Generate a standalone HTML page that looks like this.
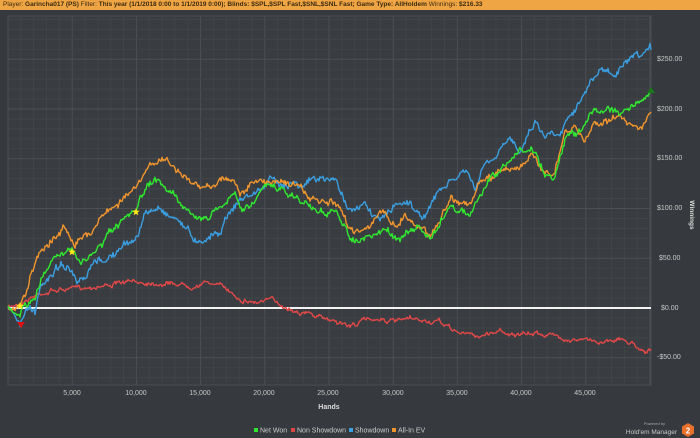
<!DOCTYPE html>
<html><head><meta charset="utf-8"><style>
html,body{margin:0;padding:0;width:700px;height:438px;overflow:hidden;background:#36393d;font-family:"Liberation Sans",sans-serif}
#hdr{position:absolute;left:0;top:0;width:700px;height:10px;background:#f0a544;font-size:6.5px;line-height:10px;color:#3a2a10;white-space:nowrap;padding-left:3px;box-sizing:border-box}
#hdr b{font-weight:bold}
svg{position:absolute;left:0;top:0}
.yl{font-size:7px;fill:#c8c8c8}
.xl{font-size:7px;fill:#c8c8c8}
</style></head><body>
<div id="hdr">Player: <b>Garincha017 (PS)</b> Filter: <b>This year (1/1/2018 0:00 to 1/1/2019 0:00); Blinds: $SPL,$SPL Fast,$SNL,$SNL Fast; Game Type: AllHoldem</b> Winnings: <b>$216.33</b></div>
<svg id="s" width="700" height="438" xmlns="http://www.w3.org/2000/svg">
<rect x="8" y="16" width="643" height="369" fill="#393c40" stroke="#4a4d52" stroke-width="1"/>
<g id="grid"></g>
<line x1="8" y1="308" x2="651" y2="308" stroke="#f2f2f2" stroke-width="2"/>
<g id="lines" fill="none" stroke-width="1.4" stroke-linejoin="round"></g>
<g class="yl">
<text x="657" y="61">$250.00</text><text x="657" y="111">$200.00</text><text x="657" y="160">$150.00</text>
<text x="657" y="210">$100.00</text><text x="659" y="260">$50.00</text><text x="661" y="310">$0.00</text><text x="657" y="359">-$50.00</text>
</g>
<text x="690" y="215" transform="rotate(90 690 215)" style="font-size:6.5px;font-weight:bold;fill:#ddd" text-anchor="middle">Winnings</text>
<g class="xl" text-anchor="middle">
<text x="72" y="395">5,000</text><text x="136" y="395">10,000</text><text x="200" y="395">15,000</text><text x="264" y="395">20,000</text>
<text x="328" y="395">25,000</text><text x="393" y="395">30,000</text><text x="457" y="395">35,000</text><text x="521" y="395">40,000</text><text x="585" y="395">45,000</text>
</g>
<text x="329" y="409" text-anchor="middle" style="font-size:7px;font-weight:bold;fill:#ddd">Hands</text>
<g style="font-size:7px;fill:#ccc">
<rect x="254" y="428" width="4" height="4" fill="#2ee62e"/><text x="260" y="432.5">Net Won</text>
<rect x="291" y="428" width="4" height="4" fill="#e04545"/><text x="297" y="432.5">Non Showdown</text>
<rect x="349" y="428" width="4" height="4" fill="#3aa0e0"/><text x="355" y="432.5">Showdown</text>
<rect x="392" y="428" width="4" height="4" fill="#f0952e"/><text x="398" y="432.5">All-In EV</text>
</g>
<text x="665" y="425" text-anchor="end" style="font-size:4px;fill:#aaa">Powered by</text>
<text x="677" y="434" text-anchor="end" style="font-size:6.5px;fill:#c8c8c8">Hold'em Manager</text>
<polygon points="688,423 694,426.5 694,433.5 688,437 682,433.5 682,426.5" fill="#e8702a"/>
<text x="688" y="433.5" text-anchor="middle" style="font-size:8px;font-weight:bold;fill:#fff">2</text>
<g id="marks"></g>
</svg>
<script>
var NS="http://www.w3.org/2000/svg",g=document.getElementById('grid'),L=document.getElementById('lines'),M=document.getElementById('marks');
function ln(x1,y1,x2,y2,c){var e=document.createElementNS(NS,'line');e.setAttribute('x1',x1);e.setAttribute('y1',y1);e.setAttribute('x2',x2);e.setAttribute('y2',y2);e.setAttribute('stroke',c);e.setAttribute('stroke-width',1);g.appendChild(e);}
for(var i=0;i<=50;i++){var x=8+i*12.84;ln(x,16,x,385,i%5==0?'#4c4f54':'#414448');}
for(var v=-70;v<=290;v+=10){var y=308-v*0.995;if(y<16||y>385)continue;ln(8,y,651,y,v%50==0?'#4c4f54':'#414448');}
var seed=7;function rnd(){seed=(seed*16807)%2147483647;return seed/2147483647;}
function path(pts,col,amp){var d='',w=0;for(var k=0;k<pts.length-1;k++){var a=pts[k],b=pts[k+1];for(var x=a[0];x<b[0];x+=1){var t=(x-a[0])/(b[0]-a[0]);w=w*0.85+(rnd()-0.5)*amp*0.9;var y=a[1]+(b[1]-a[1])*t+w+(rnd()-0.5)*amp*0.8;d+=(d?'L':'M')+x.toFixed(1)+' '+y.toFixed(1);}}
d+='L'+pts[pts.length-1][0]+' '+pts[pts.length-1][1];var e=document.createElementNS(NS,'path');e.setAttribute('d',d);e.setAttribute('stroke',col);L.appendChild(e);}
var red=[[8,308],[15,305],[25,300],[40,293],[55,290],[75,289],[100,285],[125,283],[150,282],[175,283],[190,285],[210,282],[225,288],[240,298],[255,302],[270,300],[290,308],[305,312],[320,318],[335,320],[350,326],[365,320],[380,318],[395,322],[410,320],[440,323],[460,333],[480,336],[500,330],[520,336],[540,333],[560,337],[580,340],[600,342],[615,338],[630,342],[645,350],[651,349]];
var blue=[[8,310],[15,318],[20,325],[30,305],[35,315],[40,290],[50,275],[62,262],[70,270],[77,285],[85,283],[92,268],[100,262],[110,257],[130,243],[136,238],[145,215],[160,207],[170,215],[180,220],[195,240],[205,237],[220,230],[230,210],[240,200],[260,190],[270,180],[280,187],[290,180],[300,183],[310,180],[320,180],[335,180],[345,200],[355,212],[365,205],[375,218],[385,217],[395,205],[410,200],[420,218],[430,208],[440,190],[455,180],[465,170],[475,190],[485,165],[495,160],[510,140],[520,148],[535,120],[545,135],[560,130],[575,105],[585,93],[600,70],[615,75],[630,62],[640,60],[651,50]];
var orange=[[8,308],[20,302],[27,290],[30,275],[37,255],[45,243],[55,235],[65,228],[75,240],[80,235],[90,235],[100,215],[110,210],[125,195],[136,190],[145,175],[155,163],[160,158],[165,160],[175,168],[185,178],[200,190],[210,185],[225,177],[235,180],[240,195],[250,185],[260,183],[270,182],[280,178],[290,183],[300,187],[310,200],[320,203],[335,205],[350,228],[360,230],[370,222],[385,213],[395,225],[405,215],[420,227],[430,235],[440,218],[452,196],[460,200],[470,205],[480,183],[490,180],[500,170],[510,166],[520,167],[530,158],[540,167],[555,173],[565,135],[575,128],[585,142],[595,122],[610,118],[625,120],[640,126],[651,112]];
var green=[[8,310],[15,315],[20,320],[25,305],[35,300],[40,285],[45,272],[55,255],[62,248],[72,252],[80,265],[90,258],[105,240],[120,225],[136,215],[140,200],[150,185],[160,183],[170,190],[180,200],[195,215],[205,222],[215,210],[225,200],[235,195],[240,210],[250,203],[260,193],[270,185],[280,190],[290,195],[300,200],[310,207],[320,210],[335,213],[350,236],[365,240],[375,235],[388,230],[395,240],[405,232],[420,228],[430,240],[440,225],[450,205],[460,210],[470,215],[482,193],[495,175],[505,168],[520,150],[535,150],[545,175],[555,175],[565,140],[580,133],[595,108],[615,112],[640,103],[651,93]];
path(red,'#e04848',3);path(blue,'#3a9ee0',5);path(orange,'#f0952e',5);path(green,'#30e830',5);
function star(cx,cy){var p='';for(var i=0;i<10;i++){var r=i%2?1.7:4,a=-Math.PI/2+i*Math.PI/5;p+=(cx+r*Math.cos(a)).toFixed(1)+','+(cy+r*Math.sin(a)).toFixed(1)+' ';}var e=document.createElementNS(NS,'polygon');e.setAttribute('points',p);e.setAttribute('fill','#ffe81a');M.appendChild(e);}
star(20,306);star(72,252);star(136,212);
var t=document.createElementNS(NS,'polygon');t.setAttribute('points','17,322 25,322 21,328');t.setAttribute('fill','#e01010');M.appendChild(t);
var t2=document.createElementNS(NS,'polygon');t2.setAttribute('points','647,93 655,93 651,87');t2.setAttribute('fill','#1a7a1a');M.appendChild(t2);
</script>
</body></html>
